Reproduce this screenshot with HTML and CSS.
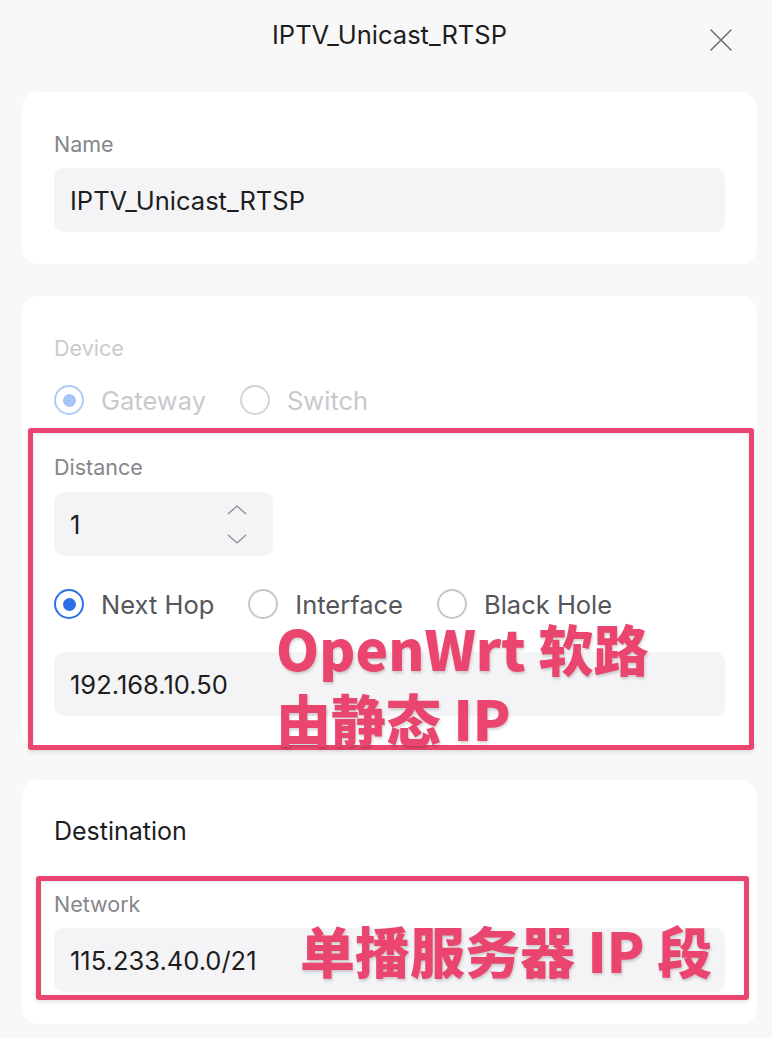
FILE: index.html
```html
<!DOCTYPE html>
<html lang="zh-CN">
<head>
<meta charset="utf-8">
<title>IPTV_Unicast_RTSP</title>
<link rel="stylesheet" href="styles.css">
</head>
<body>
<div class="sheet">
  <header class="sheet-head">
    <span></span>
    <h1 class="sheet-title">IPTV_Unicast_RTSP</h1>
    <button class="close" aria-label="Close">
      <svg width="22" height="22" viewBox="0 0 22 22"><path d="M1 1L21 21M21 1L1 21" stroke="#707075" stroke-width="1.6" fill="none" stroke-linecap="round"/></svg>
    </button>
  </header>

  <section class="card card-name">
    <div class="label">Name</div>
    <div class="field">IPTV_Unicast_RTSP</div>
  </section>

  <section class="card card-route">
    <div class="label label-disabled">Device</div>
    <div class="radio-row row-device">
      <label class="radio is-disabled is-checked"><span class="dot"></span><span class="txt">Gateway</span></label>
      <label class="radio is-disabled"><span class="dot"></span><span class="txt">Switch</span></label>
    </div>

    <div class="label label-distance">Distance</div>
    <div class="field field-number">
      <span>1</span>
      <span class="stepper">
        <svg width="20" height="10" viewBox="0 0 20 10"><path d="M1 9L10 1L19 9" stroke="#8a8a90" stroke-width="1.3" fill="none"/></svg>
        <svg width="20" height="10" viewBox="0 0 20 10"><path d="M1 1L10 9L19 1" stroke="#8a8a90" stroke-width="1.3" fill="none"/></svg>
      </span>
    </div>

    <div class="radio-row row-hop">
      <label class="radio is-checked"><span class="dot"></span><span class="txt">Next Hop</span></label>
      <label class="radio"><span class="dot"></span><span class="txt">Interface</span></label>
      <label class="radio"><span class="dot"></span><span class="txt">Black Hole</span></label>
    </div>

    <div class="field field-hop">192.168.10.50</div>

    <div class="mark mark-hop"></div>
    <div class="note note-hop">OpenWrt 软路<br>由静态 IP</div>
  </section>

  <section class="card card-dest">
    <div class="section-title">Destination</div>
    <div class="label label-network">Network</div>
    <div class="field">115.233.40.0/21</div>

    <div class="mark mark-net"></div>
    <div class="note note-net">单播服务器 IP 段</div>
  </section>
</div>
</body>
</html>
```

FILE: styles.css
```css
html, body {
  margin: 0;
  padding: 0;
  background: #f8f8f8;
}

body {
  font-family: "Inter", "Noto Sans", "Noto Sans CJK SC", sans-serif;
  color: #1d1d1f;
}

.sheet {
  width: 735px;
  margin-left: 22px;
  padding-bottom: 14px;
}

/* header: centred title with the close button on the right */
.sheet-head {
  height: 70px;
  display: grid;
  grid-template-columns: 1fr auto 1fr;
  align-items: center;
  margin-bottom: 22px;
}

.sheet-title {
  margin: 0;
  font-size: 25.5px;
  font-weight: 400;
  line-height: 32px;
  color: #1d1d1f;
}

.close {
  justify-self: end;
  margin-right: 25px;
  margin-top: 10px;
  padding: 0;
  border: 0;
  background: none;
  width: 22px;
  height: 22px;
  display: flex;
}

/* cards */
.card {
  position: relative;
  background: #fff;
  border-radius: 16px;
  padding: 0 32px 32px;
  margin-bottom: 32px;
}

.card-name { padding-top: 38px; }
.card-route { padding-top: 38px; }
.card-dest { padding-top: 35px; }

.label {
  font-size: 21.5px;
  line-height: 28px;
  color: #86868c;
  margin-bottom: 10px;
}

.label-disabled {
  color: #cacace;
  margin-bottom: 18px;
}

.label-distance {
  margin-top: 33px;
  margin-bottom: 11px;
}

.label-network { margin-top: 43px; }

.section-title {
  font-size: 25px;
  line-height: 32px;
  color: #1d1d1f;
}

.field {
  height: 64px;
  box-sizing: border-box;
  border-radius: 10px;
  background: #f4f4f6;
  padding: 0 16px;
  display: flex;
  align-items: center;
  font-size: 25.5px;
  color: #1d1d1f;
}

.field-number {
  width: 219px;
  justify-content: space-between;
  padding-right: 26px;
}

.stepper {
  display: flex;
  flex-direction: column;
  gap: 19px;
}

.stepper svg { display: block; }

.field-hop { margin-top: 28px; }

/* radio groups */
.radio-row {
  display: flex;
  align-items: center;
  height: 40px;
  gap: 34px;
}

.row-hop { margin-top: 28px; }

.radio {
  display: flex;
  align-items: center;
  gap: 17px;
  font-size: 25.5px;
  color: #55565b;
}

.radio .dot {
  width: 30px;
  height: 30px;
  box-sizing: border-box;
  border-radius: 50%;
  border: 2px solid #c7c7cb;
  display: flex;
  align-items: center;
  justify-content: center;
}

.radio.is-checked .dot {
  border-color: #2c6fe6;
}

.radio.is-checked .dot::after {
  content: "";
  width: 13px;
  height: 13px;
  border-radius: 50%;
  background: #2c6fe6;
}

.radio.is-disabled .txt { color: #c9c9cd; }
.radio.is-disabled .dot { border-color: #d4d4d8; }
.radio.is-disabled.is-checked .dot { border-color: #b0cbf6; }
.radio.is-disabled.is-checked .dot::after { background: #a6c4f6; }

/* highlight boxes and notes laid over the form */
.mark {
  position: absolute;
  box-sizing: border-box;
  border: 5px solid #ea456e;
  border-radius: 3px;
  box-shadow: 0 2px 4px rgba(0, 0, 0, 0.12), inset 0 1px 3px rgba(0, 0, 0, 0.1);
  pointer-events: none;
}

.mark-hop {
  top: 132px;
  left: 6px;
  width: 726px;
  height: 322px;
}

.mark-net {
  top: 96px;
  left: 14px;
  width: 713px;
  height: 124px;
}

.note {
  position: absolute;
  font-family: "Noto Sans CJK SC", "Noto Sans", sans-serif;
  font-weight: 900;
  font-size: 55px;
  line-height: 70px;
  color: #ea456e;
  text-shadow: 1px 2px 3px rgba(0, 0, 0, 0.18);
  white-space: nowrap;
}

.note-hop {
  top: 316px;
  left: 254px;
}

.note-net {
  top: 134px;
  left: 278px;
}
```
